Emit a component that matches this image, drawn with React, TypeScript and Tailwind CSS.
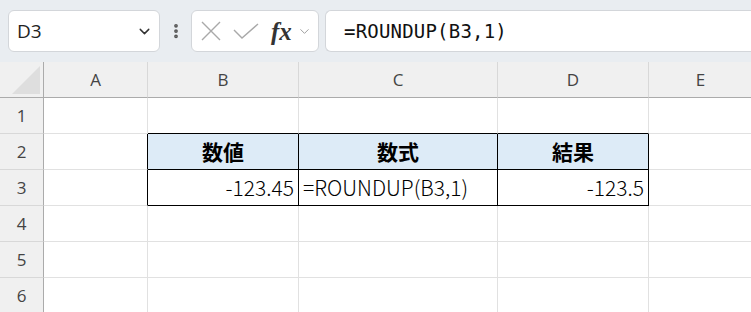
import { ChevronDown, EllipsisVertical } from "lucide-react";

const cols = [
  { key: "A", w: "w-[104px]" },
  { key: "B", w: "w-[151px]" },
  { key: "C", w: "w-[199px]" },
  { key: "D", w: "w-[151px]" },
  { key: "E", w: "w-[104px]" },
];

type Cell = { text?: string; align?: "left" | "right" | "center"; bold?: boolean; fill?: boolean; br?: boolean; bb?: boolean };

// cells keyed by "row-col"; br/bb = black right/bottom border
const cells: Record<string, Cell> = {
  "1-B": { bb: true },
  "1-C": { bb: true },
  "1-D": { bb: true },
  "2-A": { br: true },
  "2-B": { text: "数値", align: "center", bold: true, fill: true, br: true, bb: true },
  "2-C": { text: "数式", align: "center", bold: true, fill: true, br: true, bb: true },
  "2-D": { text: "結果", align: "center", bold: true, fill: true, br: true, bb: true },
  "3-A": { br: true },
  "3-B": { text: "-123.45", align: "right", br: true, bb: true },
  "3-C": { text: "=ROUNDUP(B3,1)", align: "left", br: true, bb: true },
  "3-D": { text: "-123.5", align: "right", br: true, bb: true },
};

const rows = [1, 2, 3, 4, 5, 6];

function Toolbar() {
  return (
    <div className="flex h-[62px] items-center bg-[#e9edf1] pl-[8px]">
      <div className="flex h-[42px] w-[152px] items-center justify-between rounded-[6px] border border-[#d3d6da] bg-white pl-[8px] pr-[6px]">
        <span className="font-['Open_Sans'] text-[19px] text-[#222]">D3</span>
        <ChevronDown size={17} strokeWidth={2} className="text-[#333]" />
      </div>
      <div className="flex w-[31px] justify-center">
        <EllipsisVertical size={18} strokeWidth={3} className="text-[#555]" />
      </div>
      <div className="flex h-[42px] w-[128px] items-center rounded-[6px] border border-[#d3d6da] bg-white pl-[9px]">
        <svg width="20" height="20" viewBox="0 0 20 20" fill="none" stroke="#a9a9a9" strokeWidth="1.4">
          <path d="M1 1l18 18M19 1L1 19" />
        </svg>
        <svg width="26" height="16" viewBox="0 0 26 16" fill="none" stroke="#a9a9a9" strokeWidth="1.4" className="ml-[12px]">
          <path d="M1 7l8 8L25 1" />
        </svg>
        <span className="ml-[12px] font-['Liberation_Serif'] text-[25px] font-bold italic leading-none text-[#333]">fx</span>
        <ChevronDown size={15} strokeWidth={1.5} className="ml-[5px] text-[#999]" />
      </div>
      <div className="ml-[6px] flex h-[42px] flex-1 items-center rounded-l-[6px] border border-r-0 border-[#d3d6da] bg-white pl-[18px]">
        <span className="font-['DejaVu_Sans_Mono'] text-[19px] tracking-[0.2px] text-[#111]">=ROUNDUP(B3,1)</span>
      </div>
    </div>
  );
}

function HeaderRow() {
  return (
    <div className="flex h-[36px] bg-[#f0f0f0]">
      <div className="flex h-full w-[44px] shrink-0 items-end justify-end border-r border-b border-[#ababab] pb-[3px] pr-[3px]">
        <svg width="28" height="28" viewBox="0 0 28 28">
          <path d="M28 0V28H0Z" fill="#dedede" />
        </svg>
      </div>
      {cols.map((c) => (
        <div
          key={c.key}
          className={`${c.w} flex h-full shrink-0 items-center justify-center border-r border-b border-r-[#d8d8d8] border-b-[#ababab] font-['Open_Sans'] text-[17px] text-[#444]`}
        >
          {c.key}
        </div>
      ))}
    </div>
  );
}

function Row({ n }: { n: number }) {
  return (
    <div className="flex h-[36px]">
      <div className="flex h-full w-[44px] shrink-0 items-center justify-center border-r border-b border-r-[#ababab] border-b-[#d8d8d8] bg-[#f0f0f0] font-['Open_Sans'] text-[17px] text-[#444]">
        {n}
      </div>
      {cols.map((c) => {
        const cell = cells[`${n}-${c.key}`] ?? {};
        return (
          <div
            key={c.key}
            className={`${c.w} flex h-full shrink-0 items-center overflow-hidden whitespace-nowrap border-r border-b px-[4px] font-['Noto_Sans_CJK_JP',sans-serif] text-[21px] text-black ${
              cell.br ? "border-r-black" : "border-r-[#e1e1e1]"
            } ${cell.bb ? "border-b-black" : "border-b-[#e1e1e1]"} ${cell.fill ? "bg-[#ddebf7]" : "bg-white"} ${
              cell.bold ? "font-bold" : "font-light"
            } ${cell.align === "center" ? "justify-center" : cell.align === "right" ? "justify-end" : "justify-start"}`}
          >
            {cell.text}
          </div>
        );
      })}
    </div>
  );
}

export default function App() {
  return (
    <div className="h-[312px] w-[751px] overflow-hidden bg-white">
      <Toolbar />
      <HeaderRow />
      {rows.map((n) => (
        <Row key={n} n={n} />
      ))}
    </div>
  );
}
